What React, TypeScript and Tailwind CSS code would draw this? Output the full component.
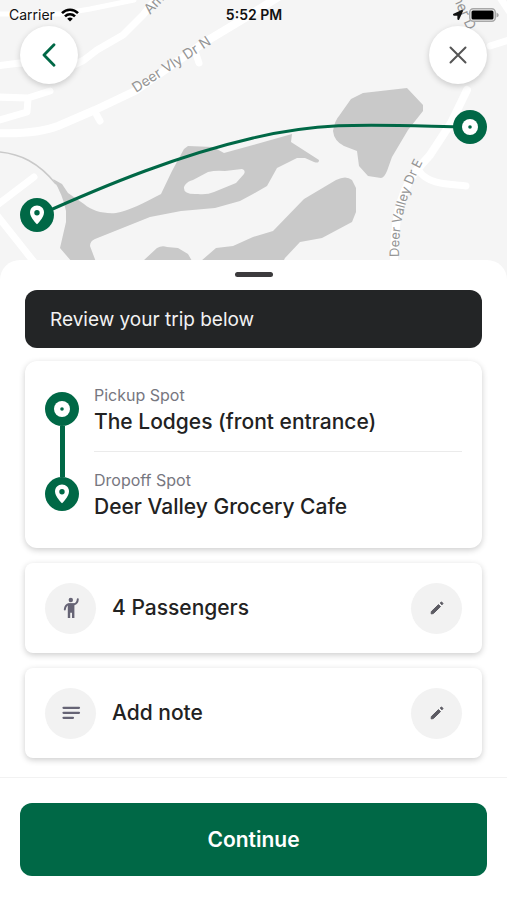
import type { ReactNode } from "react";
import { FaLocationArrow } from "react-icons/fa";

type MarkerProps = { kind: "pickup" | "dropoff"; x?: number; y?: number };

function Marker({ kind, x, y }: MarkerProps) {
  return (
    <svg x={x} y={y} width="34" height="34" viewBox="0 0 34 34" className="shrink-0">
      <circle cx="17" cy="17" r="17" fill="#006846" />
      {kind === "pickup" ? (
        <>
          <circle cx="17" cy="17" r="8" fill="#fff" />
          <circle cx="17" cy="17" r="1.8" fill="#006846" />
        </>
      ) : (
        <>
          <path d="M17 7.5 C13 7.5 10 10.5 10 14.4 C10 19.5 17 26.3 17 26.3 S24 19.5 24 14.4 C24 10.5 21 7.5 17 7.5 Z" fill="#fff" />
          <circle cx="17" cy="14.8" r="2.7" fill="#006846" />
        </>
      )}
    </svg>
  );
}

function TripMap() {
  return (
    <svg
      viewBox="0 0 507 280"
      preserveAspectRatio="xMidYMid slice"
      className="absolute inset-0 h-full w-full"
      aria-hidden="true"
    >
      <rect width="507" height="280" fill="#f5f5f5" />

      {/* roads */}
      <g fill="none" stroke="#fff" strokeWidth="7" strokeLinejoin="round" strokeLinecap="round">
        <path d="M-4 66 L20 63 L66 69 L84 60 L97 50 L123 35 L143 15 L158 -4" />
        <path d="M-4 14 L60 14 L90 9 L134 0" strokeWidth="5" />
        <path d="M-4 133 C20 134 40 133 58 126 L95 110 L135 91 L205 42 L245 18 L280 -4" strokeWidth="8" />
        <path d="M95 112 L100 121 M196 54 L199 63" />
        <path d="M-4 97 L28 98 L50 91 M28 99 L27 112 L-4 121" />
        <path d="M-4 206 L34 177 M-4 214 L34 262" />
        <path d="M467 90 L451 123 L430 155 L415 172 C398 196 394 225 394 264" strokeWidth="8" />
        <path d="M419 171 C428 184 446 184 466 186" />
        <path d="M490 46 L512 39 M499 -4 L511 14" />
      </g>

      {/* water */}
      <path d="M0 152 C20 154 38 162 56 184" fill="none" stroke="#c9c9c9" strokeWidth="1.5" />
      <g fill="#c9c9c9">
        <path
          fillRule="evenodd"
          d="M53 179 L62 184 L68 193 L84 204 C92 211 104 214 116 213 C128 211 144 203 161 194 L172 171 L184 149 L188 146 L213 147 L224 153 L253 145 L292 134 L291 142 L319 160 C319 163 317 163 314 162 L305 158 L297 158 L277 168 L267 186 L253 194 L240 201 L215 208 L181 211 L150 217 L95 239 Q90 241 90 246 L96 262 L72 262 L60 248 L66 222 L66 211 Q63 195 53 179 Z M185 185 Q188 181 193 180 L208 172 Q216 170 225 171 L242 169 Q246 170 244 174 L236 183 L214 192 Q207 195 198 194 Q183 195 184 187 Z"
        />
        <path d="M143 261 L157 248 Q162 245 167 247 L178 248 L188 254 L192 261 Z" />
        <path d="M201 261 L216 248 L233 246 L253 237 L273 231 L304 199 L336 180 Q346 175 352 180 L356 188 L356 212 L352 222 L322 238 L300 242 L285 258 L283 262 Z" />
        <path d="M333 131 Q335 120 339 116 L351 99 L363 93 L407 88 L423 105 L423 111 L408 130 L392 157 L387 171 Q384 178 381 178 L368 176 L359 166 L357 151 L344 146 Q334 141 333 131 Z" />
      </g>

      {/* street names */}
      <path id="valley-drive" d="M399 257 C398 220 408 190 424 160 L434 142" fill="none" />
      <g fill="#949494" fontSize="14" className="font-['Inter',sans-serif]">
        <text transform="translate(136 93) rotate(-33)">Deer Vly Dr N</text>
        <text transform="translate(150 15) rotate(-47)">Am</text>
        <text transform="translate(453 -2) rotate(66)">ner D</text>
        <text fontSize="13">
          <textPath href="#valley-drive">Deer Valley Dr E</textPath>
        </text>
      </g>

      <path d="M37 216 C110 183 180 155 253 138 S370 125 469 127" fill="none" stroke="#006846" strokeWidth="3" />
      <Marker kind="dropoff" x={20} y={198} />
      <Marker kind="pickup" x={453} y={110} />
    </svg>
  );
}

function StatusBar() {
  return (
    <div className="flex h-[26px] items-center justify-between pt-1 pr-2 pl-[9px] text-[14px] leading-5 text-[#111]">
      <div className="flex flex-1 items-center gap-[6px]">
        Carrier
        <svg width="18" height="14" viewBox="0 0 18 14" fill="none" stroke="#000" strokeWidth="2.6">
          <path d="M1 5.2 C5.5 0.6 12.5 0.6 17 5.2" />
          <path d="M4 8.4 C6.8 5.6 11.2 5.6 14 8.4" />
          <path d="M9 13.6 L6.2 10.7 Q9 8.3 11.8 10.7 Z" fill="#000" stroke="none" />
        </svg>
      </div>
      <div className="font-semibold">5:52 PM</div>
      <div className="flex flex-1 items-center justify-end gap-[6px]">
        <FaLocationArrow size={10} />
        <svg width="30" height="14" viewBox="0 0 30 14">
          <rect x="0.75" y="0.75" width="25.5" height="12.5" rx="3.5" fill="#f5f5f5" stroke="#a8a8a8" strokeWidth="1.5" />
          <rect x="2.5" y="2.5" width="22" height="9" rx="1.5" fill="#000" />
          <path d="M27.5 4.5 Q29.8 5.5 29.8 7 Q29.8 8.5 27.5 9.5 Z" fill="#a8a8a8" />
        </svg>
      </div>
    </div>
  );
}

function RoundButton({ label, children }: { label: string; children: ReactNode }) {
  return (
    <button
      type="button"
      aria-label={label}
      className="flex size-[58px] items-center justify-center rounded-full bg-white shadow-[0_2px_6px_rgba(0,0,0,0.18)]"
    >
      {children}
    </button>
  );
}

function WavingPerson() {
  return (
    <svg width="24" height="24" viewBox="0 0 24 24" fill="currentColor">
      <circle cx="11.8" cy="4" r="2.2" />
      <path
        d="M18.8 3.2 C18.6 6 17.4 7.8 15 8.3 H10 C7.4 8.5 6.2 10.4 5.8 13.4"
        fill="none"
        stroke="currentColor"
        strokeWidth="2"
        strokeLinecap="round"
      />
      <path d="M8.8 7.6 H15.4 V22 H13 V16.8 H11.2 V22 H8.8 Z" />
    </svg>
  );
}

function NoteLines() {
  return (
    <svg width="24" height="24" viewBox="0 0 24 24" fill="none" stroke="currentColor" strokeWidth="2.2" strokeLinecap="round">
      <path d="M4.5 6.8 H20 M4.5 11.8 H20 M4.5 16.8 H14" />
    </svg>
  );
}

function Pencil() {
  return (
    <svg width="16" height="16" viewBox="0 0 16 16" fill="currentColor" stroke="currentColor" strokeLinejoin="round">
      <path d="M2.3 11.6 L9.5 4.6 L11.5 6.6 L4.3 13.6 L2.2 13.9 Z" />
      <path d="M11.2 3 L12 2.3 Q12.6 1.9 13.2 2.4 L13.7 2.9 Q14.2 3.5 13.7 4.1 L13 4.8 Z" />
    </svg>
  );
}

function Stop({ label, place }: { label: string; place: string }) {
  return (
    <div>
      <p className="text-[16px] leading-5 text-[#77777f]">{label}</p>
      <p className="text-[21px] leading-[34px] font-medium text-[#222]">{place}</p>
    </div>
  );
}

function OptionRow({ icon, title, action }: { icon: ReactNode; title: string; action: string }) {
  return (
    <div className="flex h-[90px] items-center gap-4 rounded-lg bg-white px-5 shadow-[0_2px_6px_rgba(0,0,0,0.2)]">
      <span className="flex size-[51px] items-center justify-center rounded-full bg-[#f2f2f2] text-[#666475]">
        {icon}
      </span>
      <p className="flex-1 text-[21px] leading-[34px] font-medium text-[#222]">{title}</p>
      <button
        type="button"
        aria-label={action}
        className="flex size-[51px] items-center justify-center rounded-full bg-[#f2f2f2] text-[#5c5b63]"
      >
        <Pencil />
      </button>
    </div>
  );
}

export default function App() {
  return (
    <main className="flex min-h-screen flex-col bg-white font-['Inter',sans-serif]">
      <header className="relative h-[280px]">
        <TripMap />
        <div className="relative">
          <StatusBar />
          <div className="flex justify-between px-5">
            <RoundButton label="Back">
              <svg width="14" height="24" viewBox="0 0 14 24" fill="none" stroke="#006846" strokeWidth="2.8" strokeLinecap="round" strokeLinejoin="round">
                <path d="M12 1.8 L2 12 L12 22.2" />
              </svg>
            </RoundButton>
            <RoundButton label="Close">
              <svg width="18" height="18" viewBox="0 0 18 18" fill="none" stroke="#555" strokeWidth="2" strokeLinecap="round">
                <path d="M1.5 1.5 L16.5 16.5 M16.5 1.5 L1.5 16.5" />
              </svg>
            </RoundButton>
          </div>
        </div>
      </header>

      <section className="relative -mt-5 flex-1 rounded-t-[20px] bg-white px-[25px] pt-3 pb-[19px]">
        <div className="mx-auto h-[5px] w-[38px] rounded-full bg-[#3c3b3d]" />
        <h1 className="mt-[13px] rounded-xl bg-[#232526] px-[25px] pt-4 pb-[14px] text-[19px] leading-7 text-[#f2f2f2]">
          Review your trip below
        </h1>

        <div className="mt-[13px] flex gap-[15px] rounded-xl bg-white px-5 shadow-[0_2px_6px_rgba(0,0,0,0.2)]">
          <div className="flex flex-col items-center pt-[31px] pb-[37px]">
            <Marker kind="pickup" />
            <div className="w-[5px] flex-1 bg-[#006846]" />
            <Marker kind="dropoff" />
          </div>
          <div className="flex-1 pt-6 pb-6">
            <Stop label="Pickup Spot" place="The Lodges (front entrance)" />
            <hr className="mt-3 mb-[18px] border-[#ebebeb]" />
            <Stop label="Dropoff Spot" place="Deer Valley Grocery Cafe" />
          </div>
        </div>

        <div className="mt-[15px] flex flex-col gap-[15px]">
          <OptionRow icon={<WavingPerson />} title="4 Passengers" action="Edit passengers" />
          <OptionRow icon={<NoteLines />} title="Add note" action="Edit note" />
        </div>
      </section>

      <footer className="border-t border-[#f2f2f2] px-5 py-[25px]">
        <button
          type="button"
          className="h-[73px] w-full rounded-xl bg-[#006846] text-[21px] leading-8 font-semibold text-white"
        >
          Continue
        </button>
      </footer>
    </main>
  );
}
